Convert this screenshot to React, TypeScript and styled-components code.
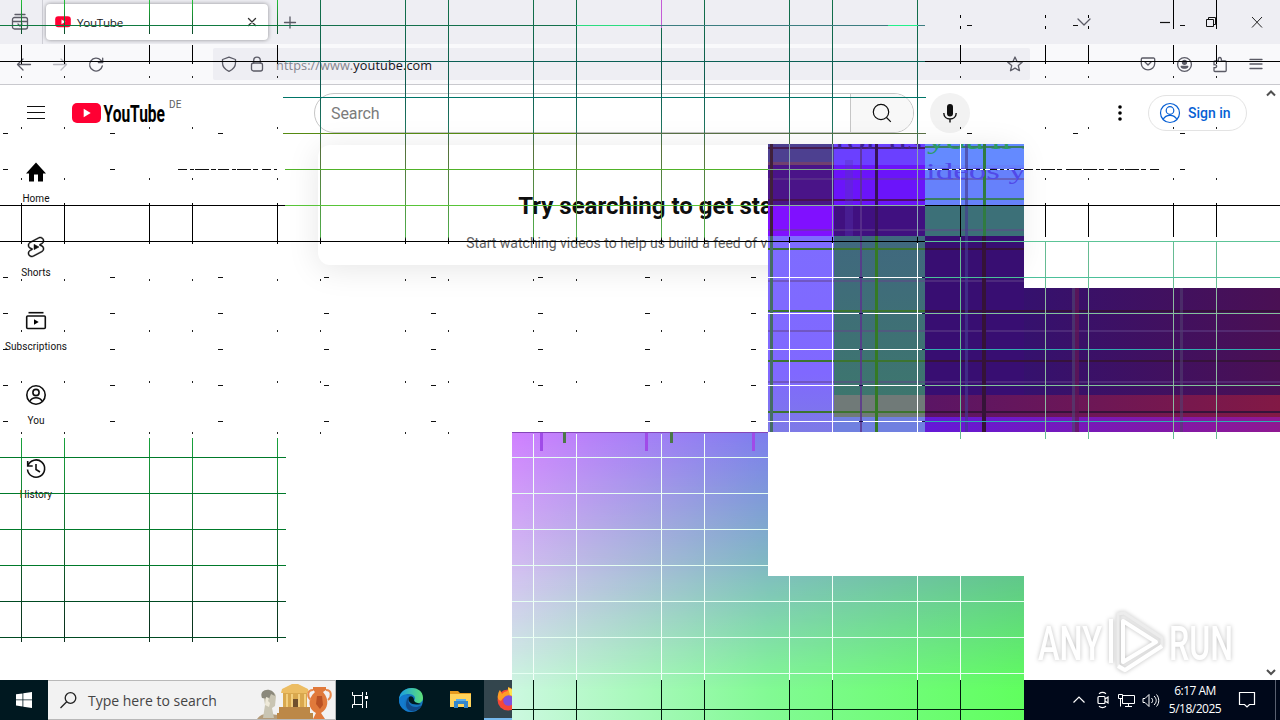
import React from "react";
import styled, { createGlobalStyle } from "styled-components";

const GlobalStyle = createGlobalStyle`
  * { box-sizing: border-box; }
  body { margin: 0; background: #fff; overflow: hidden; }
`;

const Screen = styled.div`
  position: relative;
  display: flex;
  flex-direction: column;
  width: 1280px;
  height: 720px;
  overflow: hidden;
  background: #fff;
  font-family: Roboto, sans-serif;
  color: #0f0f0f;
`;

const Icon = styled.svg<{ $size?: number }>`
  display: block;
  flex: none;
  width: ${(p) => p.$size || 24}px;
  height: ${(p) => p.$size || 24}px;
  overflow: visible;
`;

/* browser chrome */

const TabBar = styled.div`
  display: flex;
  height: 44px;
  padding: 4px 16px 4px 11px;
  background: #eeeef3;
  align-items: center;
`;

const TabDivider = styled.div`
  width: 1px;
  height: 44px;
  margin: 0 3px 0 13px;
  background: #cfcfd6;
`;

const Tab = styled.div`
  display: flex;
  align-items: center;
  width: 222px;
  height: 36px;
  margin-right: 14px;
  padding: 0 9px;
  border-radius: 4px;
  background: #fff;
  box-shadow: 0 0 4px rgba(0, 0, 0, 0.4);
`;

const TabTitle = styled.span`
  flex: 1;
  margin-left: 6px;
  font: 11.6px "Open Sans", sans-serif;
  letter-spacing: -0.25px;
  color: #15141a;
`;

const WindowButtons = styled.div`
  display: flex;
  align-items: center;
  margin-left: auto;
  gap: 31px;
`;

const TabsChevron = styled(Icon)`
  margin-right: 37px;
`;

const NavBar = styled.div`
  display: flex;
  align-items: center;
  height: 41px;
  padding: 0 16px;
  background: #f9f9fb;
  border-bottom: 1px solid #c9c9ce;
`;

const NavButtons = styled.div`
  display: flex;
  gap: 20px;
  width: 197px;
`;

const UrlBar = styled.div`
  display: flex;
  align-items: center;
  width: 817px;
  height: 32px;
  padding: 0 7px 0 8px;
  border-radius: 2px;
  background: #eeeef3;
  gap: 12px;
`;

const Url = styled.span`
  flex: 1;
  margin-left: -1px;
  padding-top: 2px;
  font: 12.7px "Open Sans", sans-serif;
  letter-spacing: 0.1px;
  color: #85858e;

  b {
    font-weight: 400;
    color: #15141a;
  }
`;

const NavTools = styled.div`
  display: flex;
  gap: 20px;
  margin-left: auto;
`;

/* page */

const Page = styled.div`
  display: grid;
  grid-template-columns: 72px 1fr 17px;
  grid-template-rows: 56px 1fr;
  height: 595px;
`;

const Masthead = styled.header`
  grid-column: 1 / 3;
  display: flex;
  align-items: center;
  padding: 0 16px 0 24px;
`;

const Logo = styled.div`
  display: flex;
  width: 242px;
  margin-left: 24px;
`;

const LogoArt = styled.svg`
  width: 93px;
  height: 20px;
  overflow: visible;
`;

const Country = styled.span`
  margin: -4px 0 0 4px;
  font-size: 10px;
  line-height: 12px;
  letter-spacing: 0.2px;
  color: #606060;
`;

const SearchBox = styled.div`
  display: flex;
  width: 600px;
  height: 40px;
  border: 1px solid #c6c6c6;
  border-radius: 20px;
  overflow: hidden;
`;

const SearchInput = styled.div`
  flex: 1;
  padding-left: 16px;
  font-size: 16px;
  line-height: 39px;
  letter-spacing: -0.1px;
  color: #7b7b7b;
`;

const SearchButton = styled.div`
  display: flex;
  align-items: center;
  justify-content: center;
  width: 63px;
  border-left: 1px solid #c6c6c6;
  background: #f8f8f8;
`;

const Mic = styled.div`
  display: flex;
  align-items: center;
  justify-content: center;
  width: 40px;
  height: 40px;
  margin-left: 16px;
  border-radius: 50%;
  background: #f2f2f2;
`;

const MenuDots = styled(Icon)`
  margin-left: auto;
`;

const SignIn = styled.div`
  display: flex;
  align-items: center;
  gap: 6px;
  width: 99px;
  height: 36px;
  margin-left: 16px;
  padding-left: 9px;
  border: 1px solid #e3e3e3;
  border-radius: 18px;
  font-size: 14px;
  font-weight: 500;
  color: #065fd4;
`;

const Scrollbar = styled.div`
  grid-row: 1 / 3;
  grid-column: 3;
  display: flex;
  flex-direction: column;
  justify-content: space-between;
  align-items: center;
  padding: 3px 1px 3px 0;
`;

const Guide = styled.nav`
  display: flex;
  flex-direction: column;
  padding-top: 4px;
`;

const GuideItem = styled.div`
  display: flex;
  flex-direction: column;
  align-items: center;
  height: 74px;
  padding-top: 16px;
  gap: 7px;
  font-size: 10px;
  line-height: 14px;
  letter-spacing: 0.08px;
  white-space: nowrap;
`;

const Feed = styled.main`
  display: flex;
  justify-content: center;
  align-items: flex-start;
`;

const Nudge = styled.section`
  width: 700px;
  height: 120px;
  margin-top: 4px;
  padding-top: 46px;
  border-radius: 12px;
  box-shadow: 0 4px 32px rgba(0, 0, 0, 0.1);
  text-align: center;

  h1 {
    margin: 0;
    font-size: 24px;
    line-height: 30px;
    font-weight: 700;
  }

  p {
    margin: 12px 0 0;
    font-size: 14px;
    line-height: 20px;
    color: #606060;
  }
`;

/* taskbar */

const Taskbar = styled.div`
  display: flex;
  height: 40px;
  background: linear-gradient(90deg, #001820 0, #001820 500px, #00081a 1024px);
  color: #fff;
`;

const TaskButton = styled.div<{ $width?: number; $active?: boolean }>`
  display: flex;
  align-items: center;
  justify-content: center;
  width: ${(p) => p.$width || 48}px;
  background: ${(p) => (p.$active ? "#33454d" : "transparent")};
  border-bottom: ${(p) => (p.$active ? "2px solid #76b9ed" : "none")};
`;

const TaskSearch = styled.div`
  display: flex;
  align-items: center;
  width: 288px;
  padding-left: 12px;
  border: 1px solid #b8b8b8;
  border-left: 0;
  background: #f2f2f2;
  font-family: "Open Sans", sans-serif;
  color: #444;

  span {
    flex: 1;
    margin-left: 11px;
    font-size: 14px;
  }
`;

const Tray = styled.div`
  display: flex;
  align-items: center;
  margin-left: auto;
  gap: 7px;
`;

const Clock = styled.div`
  width: 60px;
  margin-left: -1px;
  text-align: center;
  white-space: nowrap;
  font: 12px "Open Sans", sans-serif;
  line-height: 18px;
  letter-spacing: -0.5px;
`;

const Notifications = styled(Icon)`
  margin-left: 6px;
`;

const TrayEdge = styled.div`
  width: 5px;
  height: 40px;
  margin-left: 12px;
  border-left: 1px solid #596070;
`;

/* things floating over the desktop */

const Glitch = styled.svg`
  position: absolute;
  inset: 0;
  width: 1280px;
  height: 720px;
`;

const Watermark = styled.div`
  position: absolute;
  left: 1036px;
  top: 606px;

  svg {
    overflow: visible;
    filter: drop-shadow(0 0 2px rgba(0, 0, 0, 0.25));
  }
`;

const columns = [21, 64, 149, 192, 277, 320, 405, 448, 533, 576, 661, 704, 789, 832, 917, 960, 1045, 1088, 1173, 1216];
const rows = [25, 61, 97, 133, 169, 205, 241, 277, 313, 349, 385, 421];
const dashColumns = [3, 110, 218, 324, 431, 538, 645, 751, 860, 967, 1073, 1180];
const tickRows = [76, 127, 178, 279, 330, 381, 432];

const V = ({ x, y, to, c }: { x: number; y: number; to: number; c: string }) => (
  <rect x={x} y={y} width={1} height={to - y} fill={c} />
);
const H = ({ x, y, to, c }: { x: number; y: number; to: number; c: string }) => (
  <rect x={x} y={y} width={to - x} height={1} fill={c} />
);

const cells: [number, number, number, number, string][] = [
  [768, 144, 66, 21, "#4d4090"],
  [834, 144, 91, 21, "#6b40ff"],
  [925, 144, 99, 21, "#648aff"],
  [768, 165, 66, 40, "#4a1488"],
  [834, 165, 91, 40, "#6b14fa"],
  [925, 165, 99, 40, "#6681fb"],
  [768, 205, 66, 31, "#8010ff"],
  [834, 205, 91, 31, "#401080"],
  [925, 205, 99, 31, "#3c7078"],
  [768, 236, 66, 196, "url(#violet)"],
  [834, 236, 91, 159, "url(#slate)"],
  [834, 395, 91, 22, "#707a78"],
  [834, 417, 91, 15, "#7080e0"],
  [925, 236, 99, 159, "#380e72"],
  [1024, 288, 256, 107, "url(#plum)"],
  [925, 395, 355, 22, "url(#wine)"],
  [925, 417, 355, 15, "url(#magenta)"],
];

function Interference() {
  return (
    <Glitch viewBox="0 0 1280 720" shapeRendering="crispEdges">
      <defs>
        <linearGradient id="violet" x2="0" y2="1">
          <stop stopColor="#7e6cff" />
          <stop offset=".7" stopColor="#8068ff" />
          <stop offset="1" stopColor="#7d7ae6" />
        </linearGradient>
        <linearGradient id="slate" x2="0" y2="1">
          <stop stopColor="#40687f" />
          <stop offset="1" stopColor="#3d766e" />
        </linearGradient>
        <linearGradient id="plum">
          <stop stopColor="#35116e" />
          <stop offset="1" stopColor="#4a1054" />
        </linearGradient>
        <linearGradient id="wine">
          <stop stopColor="#5b1565" />
          <stop offset="1" stopColor="#821945" />
        </linearGradient>
        <linearGradient id="magenta">
          <stop stopColor="#6419d8" />
          <stop offset="1" stopColor="#8f1891" />
        </linearGradient>
        <linearGradient id="topTone">
          <stop stopColor="#d080ff" />
          <stop offset=".5" stopColor="#7c7cee" />
          <stop offset="1" stopColor="#5a78d0" />
        </linearGradient>
        <linearGradient id="midTone">
          <stop stopColor="#d3bff1" />
          <stop offset=".5" stopColor="#80bcc0" />
          <stop offset="1" stopColor="#60c48c" />
        </linearGradient>
        <linearGradient id="lowTone">
          <stop stopColor="#ccf8e0" />
          <stop offset=".5" stopColor="#82fa94" />
          <stop offset="1" stopColor="#60ff5e" />
        </linearGradient>
        <linearGradient id="fadeTop" gradientUnits="userSpaceOnUse" x1="0" y1="432" x2="0" y2="570">
          <stop stopColor="#fff" />
          <stop offset="1" stopColor="#000" />
        </linearGradient>
        <linearGradient id="fadeMid" gradientUnits="userSpaceOnUse" x1="0" y1="570" x2="0" y2="690">
          <stop stopColor="#fff" />
          <stop offset="1" stopColor="#000" />
        </linearGradient>
        <mask id="maskTop" maskUnits="userSpaceOnUse" x="512" y="432" width="512" height="288">
          <rect x="512" y="432" width="512" height="288" fill="url(#fadeTop)" />
        </mask>
        <mask id="maskMid" maskUnits="userSpaceOnUse" x="512" y="432" width="512" height="288">
          <rect x="512" y="432" width="512" height="288" fill="url(#fadeMid)" />
        </mask>
        <clipPath id="lower">
          <path d="M512 432h256v144h256v144H512z" />
        </clipPath>
        <clipPath id="ghost">
          <rect x="834" y="144" width="190" height="61" />
        </clipPath>
        <linearGradient id="lineLeft" x2="0" y2="1">
          <stop stopColor="#23c238" />
          <stop offset="1" stopColor="#0c4a2c" />
        </linearGradient>
        <linearGradient id="lineMain" x2="0" y2="1">
          <stop stopColor="#12704a" />
          <stop offset=".35" stopColor="#0d5a50" />
          <stop offset=".52" stopColor="#1d7560" />
          <stop offset=".6" stopColor="#566f3c" />
          <stop offset=".97" stopColor="#4fae49" />
          <stop offset=".98" stopColor="#000" />
        </linearGradient>
        <linearGradient id="lineLow" x2="0" y2="1">
          <stop stopColor="#18a33c" />
          <stop offset="1" stopColor="#092b1c" />
        </linearGradient>
      </defs>

      {/* ragged grid over the page */}
      {columns.map((x) => (
        <g key={x}>
          {x < 285 && <V x={x} y={0} to={34} c="url(#lineLeft)" />}
          {(x < 285 || x > 925) && <V x={x} y={45} to={64} c="#000" />}
          {x > 285 && x < 925 && <V x={x} y={0} to={244} c="url(#lineMain)" />}
          {x < 285 && <V x={x} y={203} to={244} c="#000" />}
          {x > 1024 && <V x={x} y={203} to={237} c="#000" />}
          {x > 1024 && <V x={x} y={241} to={439} c="#66bb93" />}
          {x > 1150 && <V x={x} y={0} to={29} c="#000" />}
          {x > 925 && x < 1150 && <V x={x} y={15} to={18} c="#000" />}
          {x > 925 && x < 1150 && <V x={x} y={26} to={29} c="#000" />}
          {x < 285 && <V x={x} y={438} to={642} c="url(#lineLow)" />}
          {tickRows
            .filter((y) => (y > 250 ? x < 768 : x < 285 || x > 925))
            .map((y) => (
              <V key={y} x={x} y={y} to={y + 2} c="#222" />
            ))}
        </g>
      ))}
      <V x={661} y={0} to={28} c="#c45bd6" />
      <H x={0} y={25} to={285} c="#0f7a40" />
      <H x={285} y={25} to={576} c="#14704c" />
      <H x={576} y={25} to={925} c="#3b7d80" />
      <H x={576} y={25} to={650} c="#2bdc80" />
      <H x={888} y={25} to={918} c="#22f08b" />
      <H x={0} y={61} to={1280} c="#000" />
      <H x={285} y={61} to={925} c="#0a5f55" />
      <H x={283} y={97} to={926} c="#007568" />
      <H x={283} y={133} to={576} c="#568a12" />
      <H x={576} y={133} to={926} c="#587045" />
      <H x={285} y={169} to={768} c="#50b228" />
      <H x={0} y={205} to={285} c="#000" />
      <H x={285} y={205} to={768} c="#58c438" />
      <H x={1024} y={205} to={1280} c="#000" />
      <H x={0} y={241} to={768} c="#000" />
      {[457, 493, 529, 565, 601, 637].map((y) => (
        <H key={y} x={0} y={y} to={286} c={y < 570 ? "#007a2a" : "#004a22"} />
      ))}
      <path d="M178 169.5h99M1024 169.5h137" stroke="#111" strokeDasharray="9 3 4 1 14 2 5 4" />
      {rows.map((y) =>
        dashColumns
          .filter((x) => (y > 250 ? x < 768 : y === 25 ? x > 925 : (y === 133 || y === 169) && (x < 285 || x > 925)))
          .map((x) => <H key={`${x}-${y}`} x={x} y={y} to={x + 5} c="#111" />)
      )}

      {/* purple plaid */}
      {cells.map(([x, y, w, h, fill]) => (
        <rect key={`${x}-${y}`} x={x} y={y} width={w} height={h} fill={fill} />
      ))}
      {[147, 199].map((y) => (
        <g key={y}>
          <rect x="768" y={y} width="157" height="2" fill="#451341" opacity=".8" />
          <rect x="925" y={y - 1} width="99" height="2" fill="#397e62" />
        </g>
      ))}
      {[248, 310, 360, 411].map((y) => (
        <g key={y}>
          <rect x="768" y={y} width="157" height="2" fill="#3c7430" />
          <rect x="925" y={y} width={y < 288 ? 99 : 355} height="2" fill="#36133b" />
        </g>
      ))}
      {[178, 229, 280, 330, 381].map((y) => (
        <rect key={y} x="768" y={y} width={y < 288 ? 256 : 512} height="2" fill="#624489" opacity=".5" />
      ))}
      <rect x="768" y="162" width="66" height="3" fill="#70406f" />
      <rect x="770" y="144" width="3" height="92" fill="#40203b" />
      <rect x="770" y="236" width="3" height="196" fill="#456d64" />
      <rect x="875" y="144" width="3" height="92" fill="#351355" />
      <rect x="875" y="236" width="3" height="196" fill="#347a24" />
      <rect x="983" y="144" width="3" height="92" fill="#307b41" />
      <rect x="982" y="236" width="4" height="196" fill="#351338" />
      <rect x="860" y="144" width="2" height="288" fill="#5b338d" opacity=".8" />
      <rect x="965" y="144" width="3" height="288" fill="#453a91" opacity=".65" />
      <rect x="1072" y="288" width="3" height="144" fill="#504070" opacity=".7" />
      <rect x="1075" y="288" width="4" height="144" fill="#651754" opacity=".7" />
      <rect x="1180" y="288" width="3" height="144" fill="#514071" opacity=".6" />
      <rect x="845" y="160" width="8" height="76" fill="#5936b5" opacity=".35" />
      <g clipPath="url(#ghost)" fontFamily="Liberation Serif, serif" fontSize="23">
        <text x="834" y="149" fill="#3c2091" textLength="88" lengthAdjust="spacingAndGlyphs">for us</text>
        <text x="927" y="149" fill="#2b9b65" textLength="105" lengthAdjust="spacingAndGlyphs">you'll l</text>
        <text x="926" y="179" fill="#5149e8" textLength="100" lengthAdjust="spacingAndGlyphs">ideos y</text>
      </g>
      {[789, 832, 917].map((x) => (
        <g key={x}>
          <V x={x} y={144} to={236} c="#8aa7b0" />
          <V x={x} y={237} to={243} c="#000" />
          <V x={x} y={243} to={432} c="#fff" />
        </g>
      ))}
      <V x={960} y={144} to={205} c="#fff" />
      <V x={960} y={205} to={237} c="#000" />
      <V x={960} y={237} to={439} c="#66bb93" />
      <H x={768} y={169} to={925} c="#7aa887" />
      <path d="M925 169.5h99" stroke="#fff" />
      <path d="M928 169.5h95" stroke="#111" strokeDasharray="4 3 2 5 7 3" />
      <H x={768} y={205} to={925} c="#8ab49b" />
      <H x={925} y={205} to={1024} c="#000" />
      <H x={768} y={241} to={925} c="#000" />
      <H x={925} y={241} to={1280} c="#5cc497" />
      {[277, 313, 349, 385, 421].map((y, i) => (
        <g key={y}>
          <H x={768} y={y} to={922} c="#fff" />
          <H x={925} y={y} to={1280} c={i === 2 || i === 4 ? "#30aeb0" : i === 0 ? "#4cc09a" : "#83c49a"} />
          <H x={859} y={y} to={863} c="#1b1150" />
          <H x={922} y={y} to={925} c="#1b1150" />
        </g>
      ))}
      {[1045, 1088, 1173, 1216].map((x) => (
        <V key={x} x={x} y={288} to={432} c="#8dbba0" />
      ))}

      {/* lower colour wash */}
      <g clipPath="url(#lower)">
        <rect x="512" y="432" width="512" height="288" fill="url(#lowTone)" />
        <rect x="512" y="432" width="512" height="288" fill="url(#midTone)" mask="url(#maskMid)" />
        <rect x="512" y="432" width="512" height="288" fill="url(#topTone)" mask="url(#maskTop)" />
        <H x={512} y={432} to={768} c="#8445b8" />
        {[540, 645, 752].map((x) => (
          <rect key={x} x={x} y="433" width="3" height="18" fill="#a04be8" />
        ))}
        {[563, 670].map((x) => (
          <rect key={x} x={x} y="432" width="3" height="11" fill="#4b7748" />
        ))}
        {[533, 576, 661, 704, 789, 832, 917, 960].map((x) => (
          <g key={x}>
            <V x={x} y={434} to={680} c="#f2fff8" />
            <V x={x} y={680} to={720} c="#00180c" />
          </g>
        ))}
        {[457, 493, 529, 565, 601, 637, 673].map((y) => (
          <H key={y} x={512} y={y} to={1024} c="#e6fff2" />
        ))}
        <H x={512} y={709} to={1024} c="#00220c" />
      </g>
    </Glitch>
  );
}

const line = { fill: "none", stroke: "currentColor", strokeWidth: 1.2 } as const;
const chrome = { fill: "none", stroke: "#5b5b66", strokeWidth: 1.3, strokeLinecap: "round", strokeLinejoin: "round" } as const;

function BrowserChrome() {
  return (
    <>
      <TabBar>
        <Icon $size={18} viewBox="0 0 18 18" {...chrome}>
          <path d="M4 1.500h10M3.500 4.500h11a2 2 0 0 1 2 2v7.500a2 2 0 0 1-2 2h-11a2 2 0 0 1-2-2V6.500a2 2 0 0 1 2-2zM1.500 8.500h15M7 11l2 2 2-2" />
        </Icon>
        <TabDivider />
        <Tab>
          <Icon $size={16} viewBox="0 0 16 16">
            <rect x=".2" y="2.300" width="15.600" height="11" rx="3" fill="#f03" />
            <path d="M6.500 5.400v4.800l4-2.400z" fill="#fff" />
          </Icon>
          <TabTitle>YouTube</TabTitle>
          <Icon $size={14} viewBox="0 0 14 14" {...chrome} stroke="#333">
            <path d="m3.500 3.500 7 7m0-7-7 7" />
          </Icon>
        </Tab>
        <Icon $size={16} viewBox="0 0 16 16" {...chrome}>
          <path d="M8 3v11M2.500 8.500h11" />
        </Icon>
        <WindowButtons>
          <TabsChevron $size={16} viewBox="0 0 16 16" {...chrome}>
            <path d="m2 5 6 6 6-6" />
          </TabsChevron>
          <Icon $size={14} viewBox="0 0 14 14" {...line}>
            <path d="M0 7.500h10" stroke="#111" />
          </Icon>
          <Icon $size={14} viewBox="0 0 14 14" fill="none" stroke="#111">
            <path d="M1.500 4.500h7v7h-7zM3.500 4.500v-2h7v7h-2" />
          </Icon>
          <Icon $size={14} viewBox="0 0 14 14" fill="none" stroke="#222">
            <path d="m2 2 10 10.500m0-10.500-10 10.500" />
          </Icon>
        </WindowButtons>
      </TabBar>
      <NavBar>
        <NavButtons>
          <Icon $size={16} viewBox="0 0 16 16" {...chrome}>
            <path d="M14.500 8.500h-13M7 3 1.500 8.500 7 14" />
          </Icon>
          <Icon $size={16} viewBox="0 0 16 16" {...chrome} stroke="#b9b9c0">
            <path d="M1.500 8.500h13M9 3l5.500 5.500L9 14" />
          </Icon>
          <Icon $size={16} viewBox="0 0 16 16" {...chrome}>
            <path d="M14.300 10A6.400 6.400 0 1 1 12.800 4.300L14.500 6.200M14.700 2.200v4.300h-4.300" />
          </Icon>
        </NavButtons>
        <UrlBar>
          <Icon $size={16} viewBox="0 0 16 16" {...chrome}>
            <path d="M8 1.200 14.500 3.500v3.500c0 4-2.500 6.500-6.500 8.300C4 13.500 1.500 11 1.500 7V3.500z" />
          </Icon>
          <Icon $size={16} viewBox="0 0 16 16" {...chrome}>
            <rect x="2.500" y="7" width="11" height="8" rx="2" />
            <path d="M4.700 7V4.500a3.300 3.300 0 0 1 6.600 0V7" />
          </Icon>
          <Url>
            https://www.<b>youtube.com</b>
          </Url>
          <Icon $size={16} viewBox="0 0 16 16" {...chrome}>
            <path d="m8 1 2.100 4.700 5.100.5-3.900 3.400 1.200 5.100L8 12.100l-4.500 2.600 1.200-5.100L.8 6.200l5.100-.5z" />
          </Icon>
        </UrlBar>
        <NavTools>
          <Icon $size={16} viewBox="0 0 16 16" {...chrome}>
            <path d="M2.500 2h11a1.200 1.200 0 0 1 1.200 1.200V7.500a6.700 6.300 0 0 1-13.400 0V3.200A1.200 1.200 0 0 1 2.500 2zM5 6l3 3 3-3" />
          </Icon>
          <Icon $size={16} viewBox="0 0 16 16" {...chrome}>
            <circle cx="8.500" cy="8.500" r="6.900" />
            <circle cx="8.500" cy="6.300" r="2" fill="#5b5b66" />
            <path d="M5.200 10.500h6.600c-.6 2.200-6 2.200-6.600 0z" fill="#5b5b66" />
          </Icon>
          <Icon $size={16} viewBox="0 0 16 16" {...chrome}>
            <path d="M3 15.500a1 1 0 0 1-1-1v-3c3.500 1 3.500-3.500 0-2.700V6a1 1 0 0 1 1-1h3.500c-1.500-4.700 4-4.700 2.700 0h4a1 1 0 0 1 1 1v8.500a1 1 0 0 1-1 1z" />
          </Icon>
          <Icon $size={16} viewBox="0 0 16 16" {...chrome}>
            <path d="M2 3.500h12M2 8h12M2 12.500h12" />
          </Icon>
        </NavTools>
      </NavBar>
    </>
  );
}

const guide = [
  { label: "Home", icon: <path d="M10 20.500v-7h4v7h5v-8h3L12 1.500 2 12.500h3v8z" fill="#000" /> },
  {
    label: "Shorts",
    icon: (
      <path
        fill="#0f0f0f"
        stroke="#0f0f0f"
        strokeWidth=".5"
        d="M10 14.650v-5.300L15 12l-5 2.650zm7.770-4.330-1.200-.5L18 9.060c1.840-.96 2.530-3.230 1.560-5.060s-3.240-2.530-5.070-1.560L6 6.940c-1.290.68-2.070 2.040-2 3.490.07 1.420.93 2.670 2.220 3.250.03.01 1.200.5 1.200.5L6 14.930c-1.830.97-2.530 3.240-1.560 5.070.97 1.830 3.240 2.530 5.070 1.560l8.500-4.500c1.290-.68 2.060-2.040 1.990-3.490-.07-1.420-.94-2.680-2.230-3.250zm-.23 5.860-8.500 4.500c-1.340.71-3.010.2-3.720-1.140-.71-1.340-.2-3.010 1.140-3.720l2.040-1.080v-1.210l-.69-.28-1.110-.46c-.99-.41-1.650-1.350-1.700-2.410-.05-1.060.52-2.060 1.460-2.560l8.500-4.500c1.340-.71 3.010-.2 3.720 1.140.71 1.340.2 3.010-1.140 3.720L15.500 9.260v1.210l1.800.74c.99.41 1.650 1.350 1.700 2.410.05 1.060-.52 2.060-1.460 2.560z"
      />
    ),
  },
  {
    label: "Subscriptions",
    icon: (
      <>
        <path d="M4.500 3.700h15" {...line} strokeWidth={1.6} />
        <rect x="2.700" y="7" width="18.600" height="12.500" rx="1" {...line} strokeWidth={1.6} />
        <path d="M10 10.300v5.400l4.700-2.700z" />
      </>
    ),
  },
  {
    label: "You",
    icon: (
      <g {...line} strokeWidth={1.6}>
        <circle cx="12" cy="12" r="9.200" />
        <circle cx="12" cy="9.500" r="3.100" />
        <path d="M5.800 18.500c2.500-5 9.900-5 12.400 0" />
      </g>
    ),
  },
  {
    label: "History",
    icon: (
      <g {...line} strokeWidth={1.6}>
        <path d="M4 8.500A8.600 8.600 0 1 1 3.500 12.500M3.700 4v5h5M12 7v5.500l4 2.500" />
      </g>
    ),
  },
];

function YouTubePage() {
  return (
    <Page>
      <Masthead>
        <Icon viewBox="0 0 24 24" {...line} strokeWidth={1}>
          <path d="M3 5.500h18M3 11.500h18M3 17.500h18" />
        </Icon>
        <Logo>
          <LogoArt viewBox="0 0 93 20">
            <rect width="29" height="20" rx="5" fill="#f03" />
            <path d="M11.700 5.700v8.600l7-4.300z" fill="#fff" />
            <text x="31.500" y="18.500" fontSize="23" fontWeight="700" fontFamily="Roboto" textLength="61.500" lengthAdjust="spacingAndGlyphs">
              YouTube
            </text>
          </LogoArt>
          <Country>DE</Country>
        </Logo>
        <SearchBox>
          <SearchInput>Search</SearchInput>
          <SearchButton>
            <Icon viewBox="0 0 24 24" {...line}>
              <circle cx="11" cy="11" r="7.700" />
              <path d="m16.500 16.500 4.300 4.300" />
            </Icon>
          </SearchButton>
        </SearchBox>
        <Mic>
          <Icon viewBox="0 0 24 24" {...line} strokeWidth={1.400}>
            <rect x="9.700" y="3.700" width="4.600" height="11" rx="2.300" fill="#0f0f0f" />
            <path d="M5.800 12c0 8 12.400 8 12.400 0M12 18v3.500" />
          </Icon>
        </Mic>
        <MenuDots viewBox="0 0 24 24">
          <circle cx="12" cy="6" r="1.800" />
          <circle cx="12" cy="12" r="1.800" />
          <circle cx="12" cy="18" r="1.800" />
        </MenuDots>
        <SignIn>
          <Icon viewBox="0 0 24 24" {...line}>
            <circle cx="12" cy="12" r="9.500" />
            <circle cx="12" cy="9.500" r="3.800" />
            <path d="M5 18.500c3-5.500 11-5.500 14 0" />
          </Icon>
          Sign in
        </SignIn>
      </Masthead>
      <Scrollbar>
        <Icon $size={10} viewBox="0 0 10 10" fill="none" stroke="#505050" strokeWidth="2">
          <path d="m1 7.500 4-4 4 4" />
        </Icon>
        <Icon $size={10} viewBox="0 0 10 10" fill="none" stroke="#505050" strokeWidth="2">
          <path d="m1 3 4 4 4-4" />
        </Icon>
      </Scrollbar>
      <Guide>
        {guide.map((item) => (
          <GuideItem key={item.label}>
            <Icon viewBox="0 0 24 24">{item.icon}</Icon>
            {item.label}
          </GuideItem>
        ))}
      </Guide>
      <Feed>
        <Nudge>
          <h1>Try searching to get started</h1>
          <p>Start watching videos to help us build a feed of videos you'll love.</p>
        </Nudge>
      </Feed>
    </Page>
  );
}

function DesktopBar() {
  return (
    <Taskbar>
      <TaskButton>
        <Icon $size={16} viewBox="0 0 16 16" fill="#fff">
          <path d="M0 2.300 6.500 1.400v6.100H0zM7.300 1.300 16 0v7.500H7.300zM0 8.300h6.500v6.200L0 13.600zM7.300 8.300H16V16l-8.700-1.300z" />
        </Icon>
      </TaskButton>
      <TaskSearch>
        <Icon $size={17} viewBox="0 0 17 17" fill="none" stroke="#222" strokeWidth="1.300">
          <circle cx="10.500" cy="6" r="5.300" />
          <path d="M6.700 9.800.5 16" />
        </Icon>
        <span>Type here to search</span>
        <svg width="78" height="38" viewBox="0 0 78 38">
          <path d="M0 38c5-6 8-5 13-5l8 1v4z" fill="#b49c7a" />
          <path d="M7 18c-4-9 10-11 12-3l-1 10-3 2 2 10H6l2-13z" fill="#c9c5b3" />
          <path d="M5 17c-4-10 12-11 13-2l-4-2-2 5z" fill="#8b897c" />
          <path d="M9 16l3 1-1 3 2 2-1 4-4-2z" fill="#eee9d8" />
          <path d="M22 26h31v7H22zM20 32h36v6H20z" fill="#bc8847" />
          <path d="M26 12h24v14H26z" fill="#d9a84e" />
          <path d="m24 12 1-4 10-5h6l10 5 1 4z" fill="#ecbd63" />
          <path d="M29 13h2v13h-2zm5 0h2v13h-2zm7 0h2v13h-2zm6 0h2v13h-2z" fill="#f3cf7f" />
          <path d="M36 18h5v8h-5z" fill="#70502d" />
          <path d="M56 6h13v3l-3 2c7 8 5 17-2 21l4 6H56l3-6c-8-4-9-14-1-21l-2-2z" fill="#e0793b" />
          <path d="M56 9c-6 0-6 7-2 10M69 9c6 0 6 7 2 10" fill="none" stroke="#e8894e" strokeWidth="2" />
          <path d="M60 15h5l1 9-3 4-4-5z" fill="#b95124" />
        </svg>
      </TaskSearch>
      <TaskButton>
        <Icon $size={16} viewBox="0 0 16 16" fill="none" stroke="#fff">
          <path d="M.500 0v3.500h10V0M.500 16v-3.500h10V16M2.500 3.500v9M10.500 3.500v9M14.500 0v3M14.500 9v7" />
          <path d="M13 4h3v3h-3z" fill="#fff" stroke="none" />
        </Icon>
      </TaskButton>
      <TaskButton $width={54}>
        <Icon viewBox="0 0 24 24">
          <defs>
            <linearGradient id="edgeTop">
              <stop stopColor="#179ce4" />
              <stop offset="1" stopColor="#5ee078" />
            </linearGradient>
          </defs>
          <circle cx="12" cy="12" r="12" fill="#1474bf" />
          <path d="M0 12C0-3 24-4 24 10c0 7-10 6-9 3 3-4-1-7-5-7C5 6 1 8 0 12z" fill="url(#edgeTop)" />
          <path d="M10 9c-8 4-5 15 5 15C7 25 0 19 0 12c2-6 9-6 10-3z" fill="#137bce" />
          <path d="M10 9c-3 8 5 13 13 8-3 7-15 9-16 0 0-4 1-7 3-8z" fill="#114a8b" />
          <path d="M10 9c-2 5 3 9 12 7-4-1-7-2-7-4 0-3-3-5-5-3z" fill="#001820" />
        </Icon>
      </TaskButton>
      <TaskButton $width={46}>
        <Icon $size={22} viewBox="0 0 22 22">
          <path d="M0 2h8l2 2h11v5H0z" fill="#e69b1f" />
          <path d="M0 5h21v13H0z" fill="#ffd35b" />
          <path d="M4 12h14v7h-4v-4H8v4H4z" fill="#3486cc" />
          <path d="M6 10h10v2H6z" fill="#5dafe9" />
        </Icon>
      </TaskButton>
      <TaskButton $active>
        <Icon viewBox="0 0 24 24">
          <circle cx="12" cy="13" r="10.500" fill="#f64738" />
          <path d="M2 8c0-3 2-5 2-5l2 4c3-4 7-1 6-7 9 3 12 9 10 16C19 8 9 6 5 14c-3-1-4-3-3-6z" fill="#ff9c26" />
          <path d="M12 1c5 1 9 5 10 10l-8-3z" fill="#ffe14d" />
          <circle cx="12.500" cy="13.500" r="5.300" fill="#8050db" />
        </Icon>
      </TaskButton>
      <Tray>
        <Icon $size={18} viewBox="0 0 18 18" {...line}>
          <path d="m3.500 11.500 5.500-5.500 5.500 5.500" />
        </Icon>
        <Icon $size={16} viewBox="0 0 16 16" {...line}>
          <rect x="3" y="4.500" width="7" height="7" rx="1" />
          <path d="m10 7 3-2v6l-3-2M4 1.800c2-1.500 5-1.500 7 0M4 14.200c2 1.500 5 1.500 7 0" />
        </Icon>
        <Icon $size={17} viewBox="0 0 17 17" {...line} strokeWidth={1}>
          <path d="M4.500 3.500h12v8h-12zM.500 2.500h4v4h-4zM2.500 6.500v8M10.500 11.500v3M7 14.500h7" />
        </Icon>
        <Icon $size={17} viewBox="0 0 17 17" {...line} strokeWidth={1}>
          <path d="M1 6.500h2l4-4v12l-4-4H1zM9.500 6c1.500 1.500 1.500 3.500 0 5M12 4c3 3 3 6 0 9M14.500 2.500c3 3.500 3 8.500 0 12" />
        </Icon>
        <Clock>
          6:17 AM
          <br />
          5/18/2025
        </Clock>
        <Notifications $size={18} viewBox="0 0 18 18" {...line}>
          <path d="M1.500 1.500h15v12h-5L9 16l-2.500-2.500h-5z" />
        </Notifications>
        <TrayEdge />
      </Tray>
    </Taskbar>
  );
}

function AnyRunMark() {
  return (
    <Watermark>
      <svg width="200" height="72" viewBox="0 0 200 72">
        <g fill="#fff" fontFamily="Roboto, sans-serif" fontWeight="500" fontSize="49">
          <text x="2" y="54" textLength="64" lengthAdjust="spacingAndGlyphs">ANY</text>
          <text x="133" y="54" textLength="64" lengthAdjust="spacingAndGlyphs">RUN</text>
        </g>
        <g fill="none" strokeLinejoin="round">
          <path d="M82 8v53l6 4 38-24v-9L88 7z" stroke="#ececec" strokeWidth="3" />
          <path d="M87 15v41l33-20zM75 13v44M82 60l7 4 37-24" stroke="#fff" strokeWidth="4" />
        </g>
      </svg>
    </Watermark>
  );
}

function App() {
  return (
    <>
      <GlobalStyle />
      <Screen>
        <BrowserChrome />
        <YouTubePage />
        <DesktopBar />
        <Interference />
        <AnyRunMark />
      </Screen>
    </>
  );
}

export default App;
